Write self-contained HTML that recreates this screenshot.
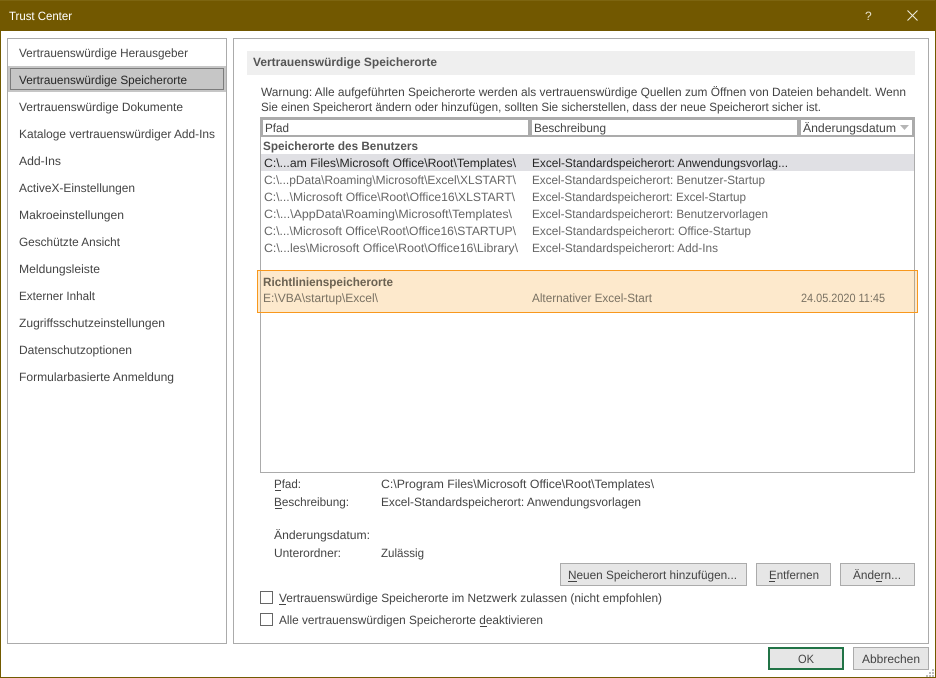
<!DOCTYPE html>
<html lang="de"><head><meta charset="utf-8"><title>Trust Center</title>
<style>
html,body{margin:0;padding:0;background:#fff;width:936px;height:678px;overflow:hidden}
svg{display:block}
text{font-family:"Liberation Sans",sans-serif;font-size:12px;fill:#444}
.g{fill:#666}.d{fill:#262626}.b{font-weight:bold;fill:#555}
</style></head><body>
<svg width="936" height="678" viewBox="0 0 936 678" xmlns="http://www.w3.org/2000/svg" text-rendering="geometricPrecision">
<rect x="0.5" y="0.5" width="935" height="677" fill="#fff" stroke="#725a00"/>
<rect x="0" y="0" width="936" height="31" fill="#725800"/>
<rect x="0" y="0" width="936" height="1" fill="#7d6510"/>
<text x="9" y="20" style="fill:#fff" textLength="63" lengthAdjust="spacingAndGlyphs">Trust Center</text>
<text x="865" y="20" style="fill:#e8e2cc;font-size:12px">?</text>
<path d="M907.5 10.5L917.5 20.5M917.5 10.5L907.5 20.5" stroke="#f2eee0" stroke-width="1" fill="none"/>

<rect x="7.5" y="38.5" width="219" height="605" fill="#fff" stroke="#ababab"/>
<rect x="8" y="66" width="218" height="26" fill="#c6c6c6"/>
<rect x="10.5" y="68.5" width="213" height="21" fill="none" stroke="#333" stroke-dasharray="1 1" shape-rendering="crispEdges"/>
<text x="19" y="57" textLength="169" lengthAdjust="spacingAndGlyphs">Vertrauenswürdige Herausgeber</text>
<text x="19" y="84" class="d" textLength="168" lengthAdjust="spacingAndGlyphs">Vertrauenswürdige Speicherorte</text>
<text x="19" y="111" textLength="164" lengthAdjust="spacingAndGlyphs">Vertrauenswürdige Dokumente</text>
<text x="19" y="138" textLength="196" lengthAdjust="spacingAndGlyphs">Kataloge vertrauenswürdiger Add-Ins</text>
<text x="19" y="165" textLength="42" lengthAdjust="spacingAndGlyphs">Add-Ins</text>
<text x="19" y="192" textLength="116" lengthAdjust="spacingAndGlyphs">ActiveX-Einstellungen</text>
<text x="19" y="219" textLength="105" lengthAdjust="spacingAndGlyphs">Makroeinstellungen</text>
<text x="19" y="246" textLength="101" lengthAdjust="spacingAndGlyphs">Geschützte Ansicht</text>
<text x="19" y="273" textLength="81" lengthAdjust="spacingAndGlyphs">Meldungsleiste</text>
<text x="19" y="300" textLength="76" lengthAdjust="spacingAndGlyphs">Externer Inhalt</text>
<text x="19" y="327" textLength="146" lengthAdjust="spacingAndGlyphs">Zugriffsschutzeinstellungen</text>
<text x="19" y="354" textLength="113" lengthAdjust="spacingAndGlyphs">Datenschutzoptionen</text>
<text x="19" y="381" textLength="155" lengthAdjust="spacingAndGlyphs">Formularbasierte Anmeldung</text>

<rect x="233.5" y="38.5" width="695" height="605" fill="#fff" stroke="#ababab"/>
<rect x="247" y="51" width="668" height="24" fill="#efefef"/>
<text x="253" y="66" class="b" textLength="184" lengthAdjust="spacingAndGlyphs">Vertrauenswürdige Speicherorte</text>
<text x="261" y="96" textLength="645" lengthAdjust="spacingAndGlyphs">Warnung: Alle aufgeführten Speicherorte werden als vertrauenswürdige Quellen zum Öffnen von Dateien behandelt. Wenn</text>
<text x="261" y="111" textLength="560" lengthAdjust="spacingAndGlyphs">Sie einen Speicherort ändern oder hinzufügen, sollten Sie sicherstellen, dass der neue Speicherort sicher ist.</text>

<rect x="260.5" y="117.5" width="654" height="355" fill="#fff" stroke="#ababab"/>
<rect x="260" y="117" width="655" height="20" fill="#ababab"/>
<rect x="263" y="120" width="265" height="15" fill="#fff"/>
<rect x="532" y="120" width="265" height="15" fill="#fff"/>
<rect x="801" y="120" width="111" height="15" fill="#fff"/>
<text x="265" y="132" textLength="24" lengthAdjust="spacingAndGlyphs">Pfad</text>
<text x="534" y="132" textLength="72" lengthAdjust="spacingAndGlyphs">Beschreibung</text>
<text x="803" y="132" textLength="93" lengthAdjust="spacingAndGlyphs">Änderungsdatum</text>
<path d="M900 125H909L904.500 130Z" fill="#b5b5b5"/>

<text x="263" y="150" class="b" textLength="155" lengthAdjust="spacingAndGlyphs">Speicherorte des Benutzers</text>
<rect x="261" y="154" width="653" height="17" fill="#e0e0e4"/>
<text x="264" y="167" class="d" textLength="252" lengthAdjust="spacingAndGlyphs">C:\...am Files\Microsoft Office\Root\Templates\</text>
<text x="532" y="167" class="d" textLength="256" lengthAdjust="spacingAndGlyphs">Excel-Standardspeicherort: Anwendungsvorlag...</text>
<text x="264" y="184" class="g" textLength="252" lengthAdjust="spacingAndGlyphs">C:\...pData\Roaming\Microsoft\Excel\XLSTART\</text>
<text x="532" y="184" class="g" textLength="233" lengthAdjust="spacingAndGlyphs">Excel-Standardspeicherort: Benutzer-Startup</text>
<text x="264" y="201" class="g" textLength="251" lengthAdjust="spacingAndGlyphs">C:\...\Microsoft Office\Root\Office16\XLSTART\</text>
<text x="532" y="201" class="g" textLength="214" lengthAdjust="spacingAndGlyphs">Excel-Standardspeicherort: Excel-Startup</text>
<text x="264" y="218" class="g" textLength="248" lengthAdjust="spacingAndGlyphs">C:\...\AppData\Roaming\Microsoft\Templates\</text>
<text x="532" y="218" class="g" textLength="236" lengthAdjust="spacingAndGlyphs">Excel-Standardspeicherort: Benutzervorlagen</text>
<text x="264" y="235" class="g" textLength="252" lengthAdjust="spacingAndGlyphs">C:\...\Microsoft Office\Root\Office16\STARTUP\</text>
<text x="532" y="235" class="g" textLength="219" lengthAdjust="spacingAndGlyphs">Excel-Standardspeicherort: Office-Startup</text>
<text x="264" y="252" class="g" textLength="254" lengthAdjust="spacingAndGlyphs">C:\...les\Microsoft Office\Root\Office16\Library\</text>
<text x="532" y="252" class="g" textLength="186" lengthAdjust="spacingAndGlyphs">Excel-Standardspeicherort: Add-Ins</text>

<rect x="258" y="271" width="659.500" height="41" fill="#fde9cc"/>
<path d="M260.500 271V312M914.500 271V312" stroke="#b5a995"/>
<rect x="257.500" y="270.500" width="660" height="42" fill="none" stroke="#f8981d"/>
<text x="263" y="286" class="b" style="fill:#6b6252" textLength="130" lengthAdjust="spacingAndGlyphs">Richtlinienspeicherorte</text>
<text x="263" y="302" style="fill:#7a7263" textLength="115" lengthAdjust="spacingAndGlyphs">E:\VBA\startup\Excel\</text>
<text x="532" y="302" style="fill:#7a7263" textLength="120" lengthAdjust="spacingAndGlyphs">Alternativer Excel-Start</text>
<text x="801" y="302" style="fill:#7a7263" textLength="84" lengthAdjust="spacingAndGlyphs">24.05.2020 11:45</text>

<text x="274" y="488" textLength="27" lengthAdjust="spacingAndGlyphs">Pfad:</text>
<rect x="275" y="490" width="6" height="1" fill="#444"/>
<text x="274" y="506" textLength="75" lengthAdjust="spacingAndGlyphs">Beschreibung:</text>
<rect x="275" y="508" width="7" height="1" fill="#444"/>
<text x="274" y="539" textLength="96" lengthAdjust="spacingAndGlyphs">Änderungsdatum:</text>
<text x="274" y="557" textLength="67" lengthAdjust="spacingAndGlyphs">Unterordner:</text>
<text x="381" y="488" textLength="273" lengthAdjust="spacingAndGlyphs">C:\Program Files\Microsoft Office\Root\Templates\</text>
<text x="381" y="506" textLength="260" lengthAdjust="spacingAndGlyphs">Excel-Standardspeicherort: Anwendungsvorlagen</text>
<text x="381" y="557" textLength="43" lengthAdjust="spacingAndGlyphs">Zulässig</text>

<rect x="560.500" y="563.500" width="186" height="22" fill="#e6e6e6" stroke="#ababab"/>
<text x="568" y="579" textLength="169" lengthAdjust="spacingAndGlyphs">Neuen Speicherort hinzufügen...</text>
<rect x="568" y="581" width="9" height="1" fill="#444"/>
<rect x="756.500" y="563.500" width="74" height="22" fill="#e6e6e6" stroke="#ababab"/>
<text x="769" y="579" textLength="50" lengthAdjust="spacingAndGlyphs">Entfernen</text>
<rect x="769" y="581" width="6" height="1" fill="#444"/>
<rect x="840.500" y="563.500" width="74" height="22" fill="#e6e6e6" stroke="#ababab"/>
<text x="853" y="579" textLength="48" lengthAdjust="spacingAndGlyphs">Ändern...</text>
<rect x="876" y="581" width="6" height="1" fill="#444"/>

<rect x="260.500" y="591.500" width="12" height="12" fill="#fff" stroke="#666"/>
<text x="279" y="602" textLength="383" lengthAdjust="spacingAndGlyphs">Vertrauenswürdige Speicherorte im Netzwerk zulassen (nicht empfohlen)</text>
<rect x="279" y="604" width="7" height="1" fill="#444"/>
<rect x="260.500" y="613.500" width="12" height="12" fill="#fff" stroke="#666"/>
<text x="279" y="624" textLength="264" lengthAdjust="spacingAndGlyphs">Alle vertrauenswürdigen Speicherorte deaktivieren</text>
<rect x="480" y="626" width="7" height="1" fill="#444"/>

<rect x="769" y="648" width="74" height="21" fill="#e6e6e6" stroke="#217346" stroke-width="2"/>
<text x="798" y="663" textLength="16" lengthAdjust="spacingAndGlyphs">OK</text>
<rect x="853.500" y="647.500" width="75" height="22" fill="#e6e6e6" stroke="#ababab"/>
<text x="862" y="663" textLength="58" lengthAdjust="spacingAndGlyphs">Abbrechen</text>
<path d="M932 669h2v2h-2zM929 672h2v2h-2zM932 672h2v2h-2zM926 675h2v2h-2zM929 675h2v2h-2zM932 675h2v2h-2z" fill="#bdbdbd"/>
<rect x="0" y="677" width="936" height="1" fill="#725a00"/>
<rect x="935" y="0" width="1" height="678" fill="#725a00"/>
</svg>
</body></html>
